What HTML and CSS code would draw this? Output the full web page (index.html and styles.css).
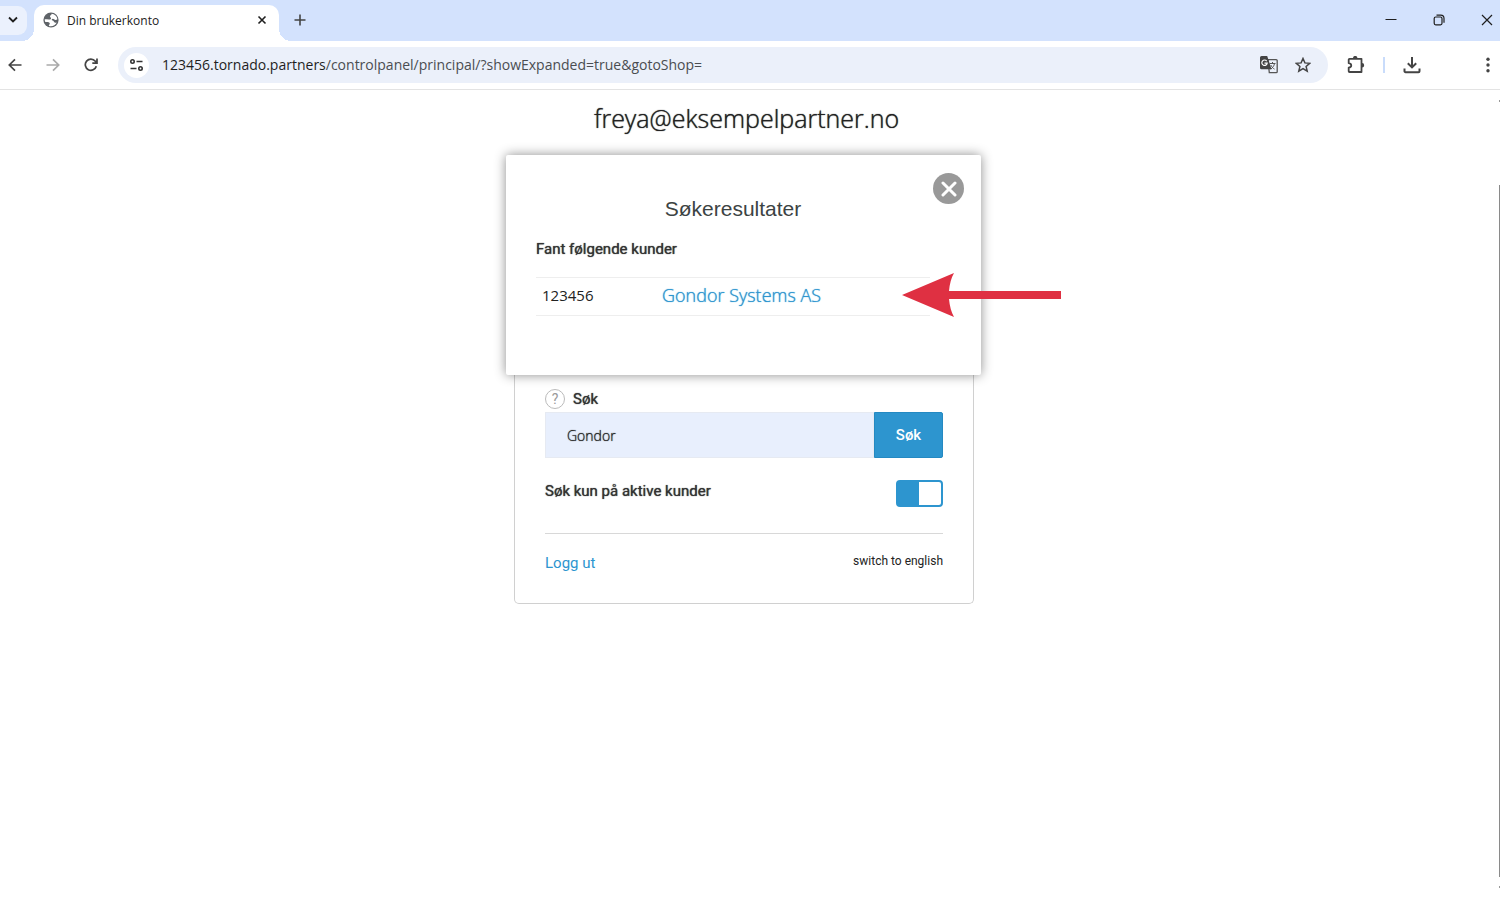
FILE: index.html
```html
<!DOCTYPE html>
<html lang="no">
<head>
<meta charset="utf-8">
<title>Din brukerkonto</title>
<link rel="stylesheet" href="styles.css">
</head>
<body>
<header class="browser">
  <div class="tabstrip">
    <button class="tab-search" aria-label="Søk i faner"><svg width="10" height="10" viewBox="0 0 10 10"><path d="M1 2.500l4 4L9 2.500" fill="none" stroke="#1f1f1f" stroke-width="1.800"/></svg></button>
    <div class="tab">
      <svg width="16" height="16" viewBox="0 0 16 16"><circle cx="8" cy="8" r="7.600" fill="#5f6368"/><path d="M8.600 1.700C8.900 2.800 7.200 3 7 4.300c-.1 1 .9 1 1 2 .1 1-.8 1.300-2 1.200-1.600-.1-2.700-.2-4.300-.2 0 1 .2 1.900.6 2.700 1.600.1 3.300-.1 4.100.7.700.7.300 1.700-.4 2.300-.3.300-.2.700.1 1 3.200.8 6.300-.7 7.700-3.600-1.300.5-2.300.4-2.700-.5-.5-1-1.300-1.200-2.100-1.600-.7-.4-.2-1.400.8-1.500 1.300 0 1.500 1.100 2.500 1.200.8.100 1.500-.2 2.100-.7C14 4 11.700 1.900 8.600 1.700z" fill="#fff"/></svg>
      <span class="tab-title">Din brukerkonto</span>
      <button class="icon-btn" aria-label="Lukk fane"><svg width="10" height="10" viewBox="0 0 10 10"><path d="M1.500 1.500l7 7M8.500 1.500l-7 7" stroke="#1f1f1f" stroke-width="1.600"/></svg></button>
    </div>
    <button class="icon-btn new-tab" aria-label="Ny fane"><svg width="12" height="12" viewBox="0 0 12 12"><path d="M6 .5v11M.5 6h11" stroke="#444" stroke-width="1.600"/></svg></button>
    <div class="window-controls">
      <button class="icon-btn" aria-label="Minimer"><svg width="12" height="12" viewBox="0 0 12 12"><path d="M.5 5.500h11" stroke="#1f1f1f"/></svg></button>
      <button class="icon-btn" aria-label="Gjenopprett"><svg width="12" height="12" viewBox="0 0 12 12" fill="none" stroke="#1f1f1f" stroke-width="1.200"><rect x="1.200" y="3" width="7.800" height="7.800" rx="1.500"/><path d="M3.500 1.200h4.300a3.200 3.200 0 0 1 3.200 3.200v4.300"/></svg></button>
      <button class="icon-btn" aria-label="Lukk"><svg width="12" height="12" viewBox="0 0 12 12"><path d="M1 1l10 10M11 1L1 11" stroke="#1f1f1f" stroke-width="1.200"/></svg></button>
    </div>
  </div>
  <div class="toolbar">
    <nav class="nav">
      <button class="icon-btn" aria-label="Tilbake"><svg width="14" height="14" viewBox="0 0 14 14" fill="none" stroke="#444" stroke-width="1.700"><path d="M13.500 7H1.500M7 1.300L1.300 7 7 12.700"/></svg></button>
      <button class="icon-btn" aria-label="Frem"><svg width="14" height="14" viewBox="0 0 14 14" fill="none" stroke="#aaa" stroke-width="1.700"><path d="M.5 7h12M7 1.300L12.700 7 7 12.700"/></svg></button>
      <button class="icon-btn" aria-label="Last inn på nytt"><svg width="14" height="14" viewBox="0 0 14 14" fill="none" stroke="#444" stroke-width="1.700"><path d="M12.300 8.200A5.600 5.600 0 1 1 11.300 3.200L12.800 4.800M13 .6V5.100H8.300"/></svg></button>
    </nav>
    <div class="omnibox">
      <button class="site-info" aria-label="Vis nettstedsinformasjon"><svg width="14" height="14" viewBox="0 0 14 14" fill="none" stroke="#333" stroke-width="1.600"><circle cx="2.500" cy="3.500" r="1.700"/><path d="M6.500 3.500h6M.5 10.500h6"/><circle cx="10.500" cy="10.500" r="1.700"/></svg></button>
      <p class="url"><span class="url-host">123456.tornado.partners</span>/controlpanel/principal/?showExpanded=true&amp;gotoShop=</p>
      <button class="icon-btn" aria-label="Oversett siden"><svg width="18" height="18" viewBox="0 0 18 18"><path d="M8 3.700h8.200a1 1 0 0 1 1 1v11a1 1 0 0 1-1 1H9.300z" fill="none" stroke="#555" stroke-width="1.300"/><path d="M1.500 0h5.700L11.500 13.300H1.500A1.500 1.500 0 0 1 0 11.800V1.500A1.500 1.500 0 0 1 1.500 0z" fill="#444"/><path d="M6.700 5.100A2.700 2.700 0 1 0 7.200 7.200H4.500" fill="none" stroke="#fff" stroke-width="1.200"/><path d="M9.500 7.500h6M12.500 6v1.500M14.500 7.500c-.4 2.400-1.800 4.200-3.700 5.600M10.800 9c.8 1.900 2.100 3.200 3.700 4.100" fill="none" stroke="#555"/></svg></button>
      <button class="icon-btn" aria-label="Bokmerk"><svg width="16" height="16" viewBox="0 0 16 16"><path d="M8 1.500l1.900 4.400 4.800.4-3.600 3.200 1.100 4.700L8 11.700l-4.200 2.500 1.100-4.700L1.300 6.300l4.800-.4z" fill="none" stroke="#444" stroke-width="1.500"/></svg></button>
    </div>
    <div class="tools">
      <button class="icon-btn" aria-label="Utvidelser"><svg width="18" height="18" viewBox="0 0 18 18"><path d="M2.500 2.800h12v13.200h-12a.8.800 0 0 1-.8-.8v-3.600c3.400-.5 3.400-3.900 0-4.400V3.600a.8.800 0 0 1 .8-.8z" fill="none" stroke="#444" stroke-width="1.800" stroke-linejoin="round"/><path d="M6 2.100a2.200 2.200 0 0 1 4.400 0zM15 7.100a2.200 2.200 0 0 1 0 4.400z" fill="#444"/></svg></button>
      <span class="divider"></span>
      <button class="icon-btn" aria-label="Nedlastinger"><svg width="18" height="18" viewBox="0 0 18 18" fill="none" stroke="#444" stroke-width="2"><path d="M9 1v10M4.800 7.200L9 11.400l4.200-4.200M1.500 12.500v2.700a1 1 0 0 0 1 1h13a1 1 0 0 0 1-1v-2.700"/></svg></button>
      <button class="icon-btn menu" aria-label="Meny"><svg width="4" height="16" viewBox="0 0 4 16" fill="#444"><circle cx="2" cy="2.200" r="1.700"/><circle cx="2" cy="8" r="1.700"/><circle cx="2" cy="13.800" r="1.700"/></svg></button>
    </div>
  </div>
</header>
<main class="page">
  <h1 class="account">freya@eksempelpartner.no</h1>
  <div class="panel">
    <section class="results" role="dialog" aria-labelledby="results-title">
      <button class="close" aria-label="Lukk"><svg width="16" height="16" viewBox="0 0 16 16"><path d="M2 2l12 12M14 2L2 14" stroke="#fff" stroke-width="3" stroke-linecap="round"/></svg></button>
      <h2 class="results-title" id="results-title">Søkeresultater</h2>
      <p class="results-note">Fant følgende kunder</p>
      <table class="customers">
        <tr><td class="customer-id">123456</td><td class="customer-name"><a href="#">Gondor Systems AS</a></td></tr>
      </table>
      <svg class="arrow" width="159" height="46" viewBox="0 0 159 46"><path d="M0 23L52 1Q48 8 47 19H159v8H47Q48 38 52 45z" fill="#df3042"/></svg>
    </section>
    <form class="card">
      <div class="label-row"><span class="help">?</span><label for="query">Søk</label></div>
      <div class="search"><input id="query" type="text" value="Gondor"><button type="button">Søk</button></div>
      <div class="switch-row"><label for="active">Søk kun på aktive kunder</label><input class="switch" id="active" type="checkbox" checked></div>
      <div class="links"><a class="logout" href="#">Logg ut</a><a class="language" href="#">switch to english</a></div>
    </form>
  </div>
  <div class="scrollbar"></div>
</main>
</body>
</html>
```
FILE: styles.css
```css
* { box-sizing: border-box; }
body {
  margin: 0;
  min-height: 100vh;
  display: flex;
  flex-direction: column;
  background: #fff;
  color: #222;
  font-family: Roboto, sans-serif;
  overflow: hidden;
}
h1, h2, p { margin: 0; font-weight: 400; }
button { border: 0; padding: 0; cursor: pointer; }
a { color: #2d95cf; text-decoration: none; }
svg { display: block; }
.icon-btn { background: none; flex: none; }

.browser { border-bottom: 1px solid #e3e3e3; font-family: "Open Sans", sans-serif; }
.tabstrip { display: flex; align-items: center; height: 41px; padding-bottom: 1px; background: #d3e2fd; }
.tab-search {
  display: grid;
  place-items: center;
  width: 27px;
  height: 29px;
  padding-right: 2px;
  background: #ebf1fd;
  border-radius: 0 9px 9px 0;
}
.tab {
  position: relative;
  display: flex;
  align-items: center;
  gap: 8px;
  align-self: flex-end;
  width: 245px;
  height: 36px;
  margin: 0 0 -1px 7px;
  padding: 0 12px 6px 9px;
  background: #fff;
  border-radius: 10px 10px 0 0;
}
.tab::before, .tab::after {
  content: "";
  position: absolute;
  bottom: 0;
  width: 12px;
  height: 12px;
}
.tab::before { right: 100%; background: radial-gradient(circle at 0 0, transparent 12px, #fff 12px); }
.tab::after { left: 100%; background: radial-gradient(circle at 100% 0, transparent 12px, #fff 12px); }
.tab-title { flex: 1; font-size: 12px; }
.new-tab { margin-left: 15px; }
.window-controls { display: flex; gap: 36px; margin-left: auto; padding-right: 7px; }
.toolbar { display: flex; align-items: center; height: 48px; }
.nav { display: flex; gap: 24px; padding: 0 20px 0 8px; }
.omnibox {
  flex: 1;
  display: flex;
  align-items: center;
  gap: 17px;
  height: 36px;
  padding: 0 17px 0 6px;
  background: #ebf0fa;
  border-radius: 18px;
}
.site-info {
  display: grid;
  place-items: center;
  width: 25px;
  height: 25px;
  border-radius: 50%;
  background: #fff;
}
.url { flex: 1; margin-left: -4px; padding-bottom: 1px; font-size: 14px; color: #4a4d51; white-space: nowrap; }
.url-host { color: #1f1f1f; }
.tools { display: flex; align-items: center; padding: 0 10px 0 19px; }
.divider { width: 2px; height: 16px; margin: 0 18px 0 18px; background: #c9dcfb; }
.menu { margin-left: 65px; }

.page { position: relative; flex: 1; padding: 11px 13px 0 0; }
.account {
  padding-left: 6px;
  font: 300 25px/35px "Open Sans", sans-serif;
  text-align: center;
  text-shadow: 0 0 1px currentColor;
}
.panel { width: 475px; margin: 19px auto 0; }
.results {
  position: relative;
  z-index: 1;
  padding: 40px 51px 59px 30px;
  background: #fff;
  border-radius: 2px;
  box-shadow: 0 0 12px rgba(0, 0, 0, .45);
}
.close {
  position: absolute;
  top: 18px;
  right: 17px;
  display: grid;
  place-items: center;
  width: 31px;
  height: 31px;
  border-radius: 50%;
  background: #999;
}
.results-title {
  color: #3c4343;
  font: 21px/28px "Liberation Sans", sans-serif;
  text-align: center;
}
.results-note, .card label {
  color: #333;
  font-size: 15px;
  line-height: 22px;
  text-shadow: 0 0 1px #333;
}
.results-note { margin-top: 15px; }
.customers {
  width: 100%;
  margin-top: 17px;
  border-collapse: collapse;
  font-family: "Open Sans", sans-serif;
}
.customers td {
  height: 38px;
  padding: 0 0 3px;
  border-top: 1px solid #eee;
  border-bottom: 1px solid #eee;
}
.customers .customer-id { width: 126px; padding-left: 6px; font-size: 15px; }
.customer-name { font-size: 18px; font-weight: 300; }
.customer-name a { text-shadow: 0 0 1px currentColor; }
.arrow { position: absolute; top: 117px; left: 396px; }

.card {
  margin: 0 7px 0 8px;
  padding: 13px 30px 28px;
  border: 1px solid #d0d0d0;
  border-top: 0;
  border-radius: 0 0 5px 5px;
}
.label-row { display: flex; align-items: center; gap: 8px; }
.help {
  display: grid;
  place-items: center;
  width: 20px;
  height: 20px;
  border: 1px solid #bbb;
  border-radius: 50%;
  color: #999;
  font-size: 14px;
}
.search { display: flex; margin-top: 2px; height: 46px; }
.search input {
  flex: 1;
  min-width: 0;
  padding: 0 21px;
  border: 1px solid #e6eaf2;
  background: #e8effd;
  color: #222;
  font: 300 14px "Open Sans", sans-serif;
  text-shadow: 0 0 1px currentColor;
}
.search button {
  width: 69px;
  background: #2d95cf;
  border: 1px solid #2489c2;
  border-radius: 0 2px 2px 0;
  color: #fff;
  font: 500 15px Roboto, sans-serif;
}
.switch-row {
  display: flex;
  justify-content: space-between;
  padding: 22px 0 26px;
  border-bottom: 1px solid #d8d8d8;
}
.switch {
  appearance: none;
  width: 47px;
  height: 27px;
  margin: 0;
  border: 2px solid #2d95cf;
  border-radius: 4px;
  background: linear-gradient(#2d95cf, #2d95cf) left / 21px 100% no-repeat #fff;
}
.links { display: flex; justify-content: space-between; padding-top: 17px; }
.logout { font-size: 15px; line-height: 24px; }
.language { color: #222; font-size: 12px; line-height: 20px; }

.scrollbar {
  position: absolute;
  top: 95px;
  right: 0;
  bottom: 23px;
  width: 1px;
  background: #8a8a8a;
}
.scrollbar::before, .scrollbar::after {
  content: "";
  position: absolute;
  width: 1px;
  height: 2px;
  background: #999;
}
.scrollbar::before { top: -85px; }
.scrollbar::after { bottom: -11px; }
```
